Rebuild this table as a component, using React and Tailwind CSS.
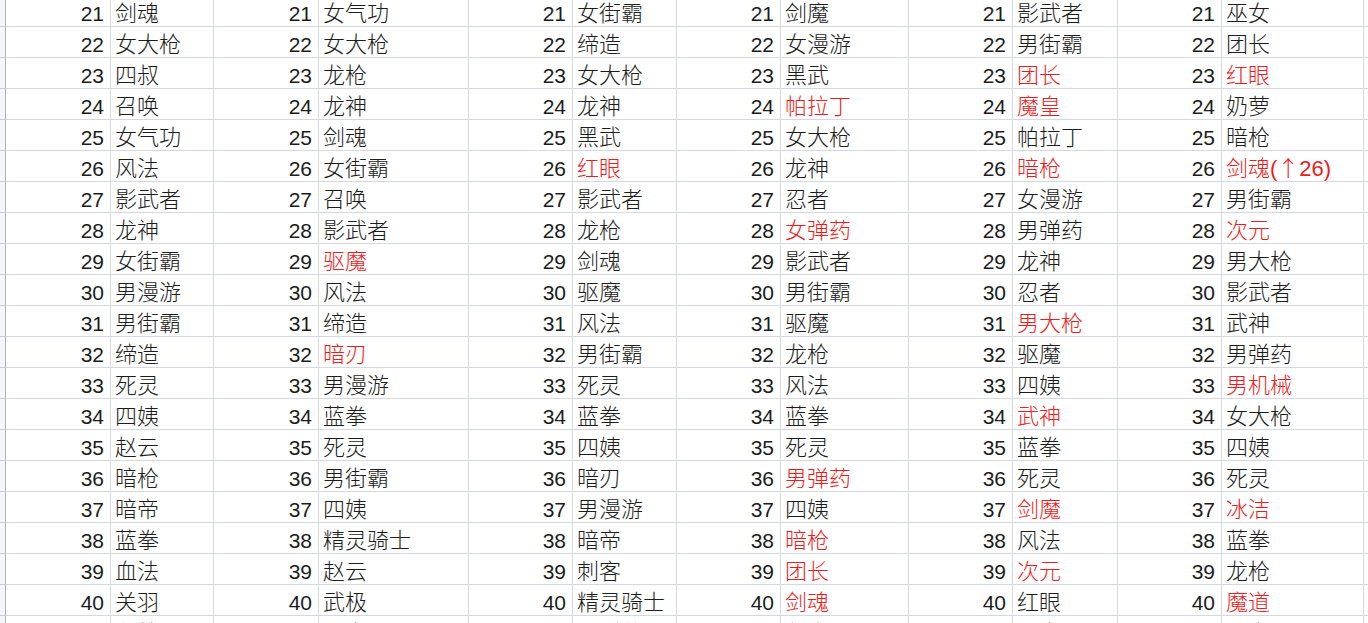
const groups = [
  ['剑魂', '女大枪', '四叔', '召唤', '女气功', '风法', '影武者', '龙神', '女街霸', '男漫游', '男街霸', '缔造', '死灵', '四姨', '赵云', '暗枪', '暗帝', '蓝拳', '血法', '关羽', '狂战'],
  ['女气功', '女大枪', '龙枪', '龙神', '剑魂', '女街霸', '召唤', '影武者', '*驱魔', '风法', '缔造', '*暗刃', '男漫游', '蓝拳', '死灵', '男街霸', '四姨', '精灵骑士', '赵云', '武极', '刺客'],
  ['女街霸', '缔造', '女大枪', '龙神', '黑武', '*红眼', '影武者', '龙枪', '剑魂', '驱魔', '风法', '男街霸', '死灵', '蓝拳', '四姨', '暗刃', '男漫游', '暗帝', '刺客', '精灵骑士', '*男弹药'],
  ['剑魔', '女漫游', '黑武', '*帕拉丁', '女大枪', '龙神', '忍者', '*女弹药', '影武者', '男街霸', '驱魔', '龙枪', '风法', '蓝拳', '死灵', '*男弹药', '四姨', '*暗枪', '*团长', '*剑魂', '*剑魔'],
  ['影武者', '男街霸', '*团长', '*魔皇', '帕拉丁', '*暗枪', '女漫游', '男弹药', '龙神', '忍者', '*男大枪', '驱魔', '四姨', '*武神', '蓝拳', '死灵', '*剑魔', '风法', '*次元', '红眼', '刺客'],
  ['巫女', '团长', '*红眼', '奶萝', '暗枪', '*剑魂(↑26)', '男街霸', '*次元', '男大枪', '影武者', '武神', '男弹药', '*男机械', '女大枪', '四姨', '死灵', '*冰洁', '蓝拳', '龙枪', '*魔道', '刺客'],
]

const rows = Array.from({ length: 21 }, (_, i) => 21 + i)

function Cell({ children, right, red }) {
  return (
    <div
      className={`h-[31px] border-r border-b border-[#d5d9df] flex items-end pb-[1px] overflow-hidden whitespace-nowrap ${
        right ? 'justify-end pr-[6px] text-[21px]' : 'pl-[4px] text-[22px]'
      } ${red ? 'text-[#f21a1a]' : 'text-[#1c1c1c]'}`}
    >
      <span className="leading-[22px]">{children}</span>
    </div>
  )
}

// the arrow is full width in the sheet, so give it the CJK font
function Name({ text }) {
  if (!text.includes('↑')) return text
  const [a, b] = text.split('↑')
  return (
    <>
      {a}
      <span className="font-['Noto_Sans_CJK_SC',sans-serif]">↑</span>
      {b}
    </>
  )
}

export default function App() {
  return (
    <div className="h-[623px] w-[1368px] overflow-hidden bg-white font-['Liberation_Sans','Noto_Sans_CJK_SC',sans-serif] font-light">
      <div className="-mt-[4px] grid grid-cols-[6px_105px_103px_105px_150px_104px_104px_104px_128px_104px_105px_104px_142px_1fr]">
        {rows.map((n, r) => (
          <div key={n} className="contents">
            <div className="h-[31px] border-r border-b border-r-[#aeb5bf] border-b-[#c9ced6] bg-[#f4f6f9]" />
            {groups.map((g, gi) => {
              const raw = g[r]
              const red = raw.startsWith('*')
              const name = red ? raw.slice(1) : raw
              return [
                <Cell key={`n${gi}`} right>{n}</Cell>,
                <Cell key={`t${gi}`} red={red}><Name text={name} /></Cell>,
              ]
            })}
            <div className="h-[31px] border-b border-[#d5d9df]" />
          </div>
        ))}
      </div>
    </div>
  )
}
